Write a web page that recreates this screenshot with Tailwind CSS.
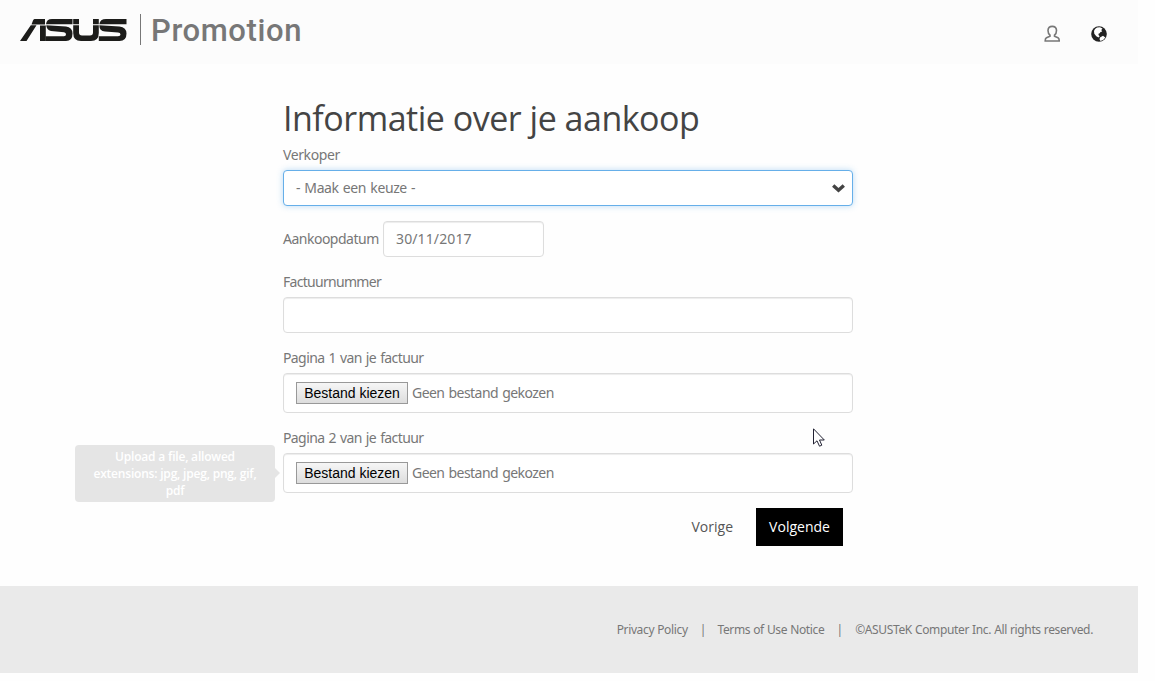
<!DOCTYPE html>
<html lang="nl">
<head>
    <meta charset="UTF-8">
    <meta name="viewport" content="width=device-width, initial-scale=1.0">
    <title>ASUS Promotion</title>
    <script src="https://cdn.jsdelivr.net/npm/@tailwindcss/browser@4"></script>
</head>
<body class="bg-[#fefefe] text-[#777] text-[14px] leading-5 font-['Noto_Sans',sans-serif] overflow-hidden">
    <div class="w-[1138px] relative">
        <!-- Header -->
        <header class="h-16 bg-[#fcfcfc] flex items-start justify-between pl-5 pr-[31px]">
            <a href="#" class="flex items-start pt-[14px]">
                <svg class="w-[107px] h-[23px] mt-[5px]" viewBox="0 0 107 23" fill="#1c1c1a">
                    <path d="M14.500 0H25V5.500H11.500L13 1.500Q13.500 0 14.500 0ZM10.800 6.200H16.500L6.500 22H0Z"/>
                    <path d="M20 6.500H25.800V22H20Z"/>
                    <path d="M26 5.300Q26.500 0 32 0H52.500V5.300Z"/>
                    <path d="M26.300 6.200L46 7.500Q52.500 8.500 52.500 14.500Q52.500 22 46 22H25.500V17.200H44Q46 17.200 46 15.200Q46 13.500 44 13.200L31 12Q26.500 11 26.300 6.200Z"/>
                    <path d="M53.200 0H59V5.300H53.200ZM73 0H78.800V5.300H73Z"/>
                    <path d="M53.200 6.200H59V13.500Q59 16.500 62 16.500H70Q73 16.500 73 13.500V6.200H78.800V14Q78.800 22 71 22H61Q53.200 22 53.200 14Z"/>
                    <path d="M79.300 5.300Q80 0 86 0H106.500V5.300Z"/>
                    <path d="M79.300 6.200L99.500 7.500Q106.500 8.500 106.500 14.500Q106.500 22 99.500 22H78.800V17.200H98Q100.500 17.200 100.500 15.400Q100.500 13.800 98 13.500L85 12.500Q79.300 12 79.300 6.200Z"/>
                </svg>
                <span class="ml-[13px] w-px h-[31px] bg-[#777]"></span>
                <span class="ml-[10px] pt-px font-[Roboto,sans-serif] font-medium text-[31px] leading-8 tracking-[.6px]">Promotion</span>
            </a>
            <nav class="flex items-center gap-[31px] pt-[25px]">
                <svg class="w-4 h-[18px] ml-px" viewBox="0 0 16 18" fill="none" stroke="#777" stroke-width="1.600">
                    <path d="M6 11.300V10.200Q4 8.500 4 5.400Q4.200 1.400 8.200 1.400Q12.300 1.400 12.500 5.400Q12.500 8.500 10.500 10.200V11.300L14 12.800Q15.300 13.500 15.200 16H1.200Q1.100 13.500 2.500 12.800Z"/>
                </svg>
                <svg class="w-4 h-4" viewBox="0 0 16 16">
                    <circle cx="8" cy="8" r="7.800" fill="#222"/>
                    <path fill="#fff" d="M4 3L6 1.500L9 1.200L11.500 2.500L10.300 4L11.200 5.400L9.500 6L8.700 7.200L7.500 7.700L7.500 9L8.700 10.200L7.500 11.500L5.300 10.300L3.300 7.800L3 5ZM9 11.500L12 9.800L14.300 11.600L12.400 13.800L9.500 15L8.500 13.200Z"/>
                </svg>
            </nav>
        </header>

        <!-- Purchase form -->
        <main class="w-[570px] h-[522px] ml-[283px] pt-[34px] tracking-[-.55px] [word-spacing:1px]">
            <h1 class="font-['Open_Sans',sans-serif] text-[34px] leading-10 tracking-[-.49px] [word-spacing:0px] text-[#444] whitespace-nowrap">Informatie over je aankoop</h1>
            <div class="mt-[7px]">
                <label class="block tracking-[-.4px]">Verkoper</label>
                <div class="mt-[5px] h-9 border border-[#66afe9] rounded-[4px] shadow-[0_0_6px_rgba(102,175,233,.45)] flex items-center justify-between pl-3 pr-[7px] bg-white">
                    <span class="tracking-[-.4px]">- Maak een keuze -</span>
                    <svg class="w-[13px] h-[9px]" viewBox="0 0 13 9" fill="none" stroke="#444" stroke-width="3.400"><path d="M1.200 1.500L6.500 6.300L11.800 1.500"/></svg>
                </div>
            </div>
            <div class="mt-[15px] flex items-center">
                <label class="w-[100px] shrink-0 tracking-[-.5px]">Aankoopdatum</label>
                <div class="w-[161px] h-9 border border-[#ddd] rounded-[4px] shadow-[inset_0_1px_1px_rgba(0,0,0,.075)] bg-white flex items-center pl-3 tracking-[.12px]">30/11/2017</div>
            </div>
            <div class="mt-[15px]">
                <label class="block tracking-[-.7px]">Factuurnummer</label>
                <div class="mt-[5px] h-9 border border-[#ddd] rounded-[4px] shadow-[inset_0_1px_1px_rgba(0,0,0,.075)] bg-white"></div>
            </div>
            <div class="mt-[15px]">
                <label class="block tracking-[-.6px]">Pagina 1 van je factuur</label>
                <div class="mt-[5px] h-10 border border-[#ddd] rounded-[4px] shadow-[inset_0_1px_1px_rgba(0,0,0,.075)] bg-white flex items-center pl-3">
                    <button class="w-28 h-[22px] border border-[#999] bg-linear-to-b from-[#f6f6f6] to-[#ddd] text-black font-['Liberation_Sans',sans-serif] leading-5 tracking-normal [word-spacing:0px] whitespace-nowrap">Bestand kiezen</button>
                    <span class="ml-1">Geen bestand gekozen</span>
                </div>
            </div>
            <div class="mt-[15px]">
                <label class="block tracking-[-.6px]">Pagina 2 van je factuur</label>
                <div class="relative mt-[5px] h-10 border border-[#ddd] rounded-[4px] shadow-[inset_0_1px_1px_rgba(0,0,0,.075)] bg-white flex items-center pl-3">
                    <button class="w-28 h-[22px] border border-[#999] bg-linear-to-b from-[#f6f6f6] to-[#ddd] text-black font-['Liberation_Sans',sans-serif] leading-5 tracking-normal [word-spacing:0px] whitespace-nowrap">Bestand kiezen</button>
                    <span class="ml-1">Geen bestand gekozen</span>
                    <!-- Tooltip, fading in -->
                    <div class="absolute -left-[209px] -top-[9px] w-[200px] h-[57px] bg-[#e5e5e5] rounded-[4px] px-2 pt-[3px] text-center text-white font-['Open_Sans',sans-serif] font-semibold text-[12px] leading-[17px] tracking-[-.2px] [word-spacing:0px]">
                        Upload a file, allowed<br>extensions: jpg, jpeg, png, gif,<br>pdf
                        <span class="absolute left-full top-[23px] border-y-[5px] border-l-[5px] border-y-transparent border-l-[#e5e5e5]"></span>
                    </div>
                </div>
            </div>
            <div class="mt-[15px] pr-[10px] flex justify-end items-center font-['Open_Sans',sans-serif] tracking-normal">
                <button class="mr-[23px] text-[#555]">Vorige</button>
                <button class="w-[87px] h-[38px] bg-black text-white">Volgende</button>
            </div>
        </main>

        <!-- Footer -->
        <footer class="h-[87px] bg-[#eaeaea] flex items-center justify-end pr-[45px] text-[12px] tracking-[-.36px] [word-spacing:.3px]">
            <a href="#">Privacy Policy</a>
            <span class="ml-3 mr-[11.500px]">|</span>
            <a href="#">Terms of Use Notice</a>
            <span class="ml-3 mr-[12.500px]">|</span>
            <span>©ASUSTeK Computer Inc. All rights reserved.</span>
        </footer>

        <!-- Mouse pointer -->
        <svg class="absolute left-[813px] top-[428px] w-3 h-[19px]" viewBox="0 0 12 19" fill="#fff" stroke="#223"><path d="M.5 .8V16L4 12.800L6.500 18.200L8.800 17.200L6.500 12H11.300Z"/></svg>
    </div>
</body>
</html>
